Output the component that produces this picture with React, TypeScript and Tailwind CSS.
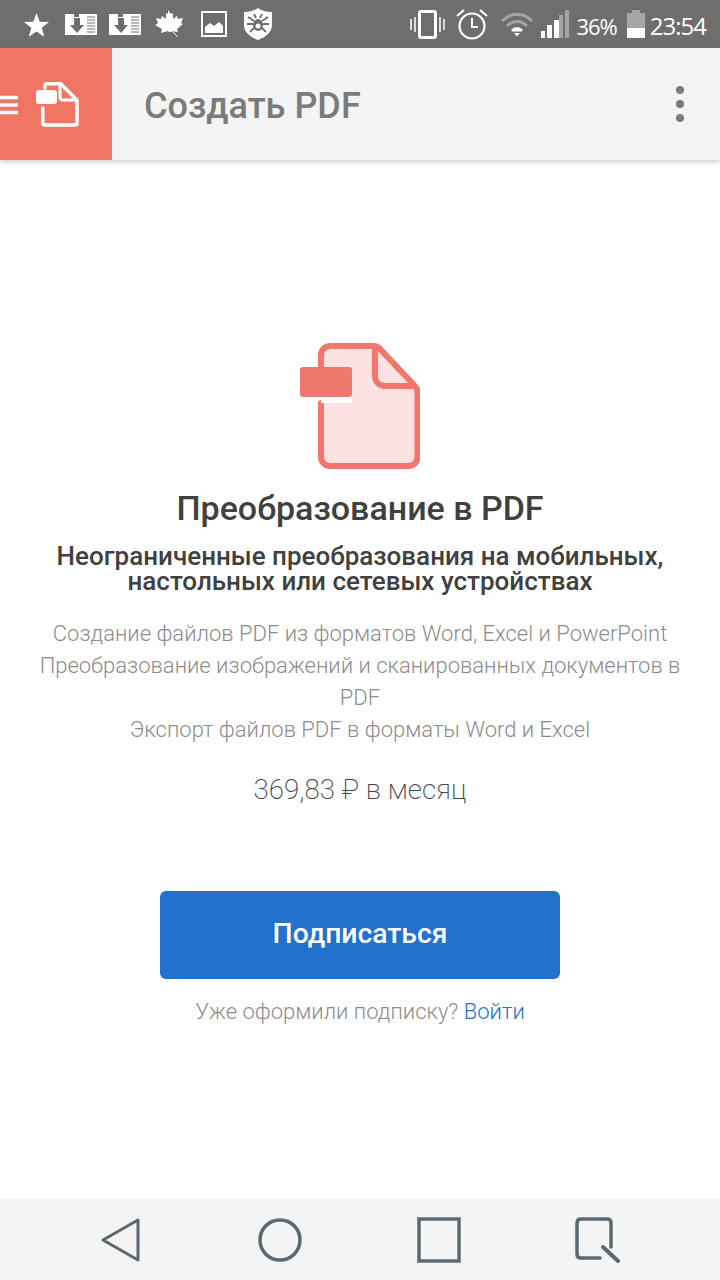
import React from 'react';

const DownloadNote: React.FC = () => (
  <svg width="32" height="22" viewBox="0 0 32 22">
    <path d="M0 1h9v3h5V1h18v21H0z" fill="#fff" />
    <path d="M9 5h6v7h4l-7 8-7-8h4z" fill="#6e6e6e" />
    <path d="M22 4h8M22 7h8M22 10h8M22 13h8M22 16h8M22 19h8" stroke="#6e6e6e" strokeWidth="1" />
  </svg>
);

const StatusBar: React.FC = () => (
  <div className="h-12 bg-[#6e6e6e] flex items-center relative shrink-0">
    <div className="flex items-center pl-6">
      <svg width="25" height="24" viewBox="0 0 25 24" className="mt-0.5">
        <path d="M12.5 0l3.2 8.7 9.3.4-7.3 5.7 2.5 9-7.7-5.2-7.7 5.200 2.500-9L0 9.100l9.300-.4z" fill="#fff" />
      </svg>
      <div className="ml-4 flex gap-3">
        <DownloadNote />
        <DownloadNote />
      </div>
      <svg width="30" height="28" viewBox="0 0 30 28" className="ml-[13px]">
        <path d="M14 0l3 4 2-1 0 6 4-3 1 3 5-1-2 5 2 1-6 5 1 3-7-1 1 1-3 0-1-1-7 2 1-4-7-4 3-2-2-5 5 1 1-3 4 3 0-6 2 1z" fill="#fff" />
        <path d="M16 19l8 8" stroke="#fff" strokeWidth="1" />
      </svg>
      <svg width="26" height="26" viewBox="0 0 26 26" className="ml-[17px]">
        <rect x="1" y="1" width="24" height="24" fill="none" stroke="#fff" strokeWidth="2" />
        <path d="M4 22v-6l5-4 4 3 5-4 4 4v7z" fill="#fff" />
      </svg>
      <svg width="28" height="32" viewBox="0 0 28 32" className="ml-[17px]">
        <path d="M14 0c3 2.500 8 4 14 4v13c0 7-6 12-14 15C6 29 0 24 0 17V4c6 0 11-1.500 14-4z" fill="#fff" />
        <ellipse cx="14" cy="17" rx="5" ry="6" fill="#6e6e6e" />
        <circle cx="14" cy="18" r="2.500" fill="#fff" />
        <path d="M4 9l6 4M24 9l-6 4M3 16h6M25 16h-6M6 24l4-4M22 24l-4-4M10 6l2 4M18 6l-2 4" stroke="#6e6e6e" strokeWidth="1.800" />
      </svg>
    </div>
    <div className="absolute right-[14px] top-0 h-12 flex items-center">
      <svg width="35" height="29" viewBox="0 0 35 29">
        <rect x="9.500" y="1.500" width="16" height="26" rx="1.500" fill="none" stroke="#fff" strokeWidth="3" />
        <path d="M1 9v11M5 7v15M30 7v15M34 9v11" stroke="#fff" strokeWidth="1.500" />
      </svg>
      <svg width="32" height="32" viewBox="0 0 32 32" className="ml-[11px]">
        <circle cx="16" cy="18" r="12.500" fill="none" stroke="#fff" strokeWidth="2.200" />
        <path d="M16 10v9h6" fill="none" stroke="#fff" strokeWidth="2" />
        <path d="M1 8l7-6M31 8l-7-6" stroke="#fff" strokeWidth="2" />
      </svg>
      <svg width="34" height="26" viewBox="0 0 34 26" className="ml-3">
        <path d="M2 10c9-9 21-9 30 0" fill="none" stroke="#a5a5a5" strokeWidth="3" />
        <path d="M7 15c6-6 14-6 20 0" fill="none" stroke="#a5a5a5" strokeWidth="3" />
        <path d="M11 19c4-4 8-4 12 0l-1.500 1.500h-9z" fill="#fff" />
        <path d="M14 22h6l-3 3.500z" fill="#fff" />
      </svg>
      <svg width="28" height="28" viewBox="0 0 28 28" className="ml-[7px]">
        <rect x="0" y="21" width="4" height="7" fill="#fff" />
        <rect x="6" y="15" width="5" height="13" fill="#fff" />
        <rect x="13" y="10" width="5" height="18" fill="#fff" />
        <rect x="18" y="5" width="4" height="23" fill="#a5a5a5" />
        <rect x="24" y="0" width="4" height="28" fill="#a5a5a5" />
      </svg>
      <span className="ml-[7px] mt-[3px] text-[22px] leading-none font-medium text-white font-['Open_Sans','Noto_Sans',sans-serif] tracking-[-1px]">36%</span>
      <svg width="18" height="28" viewBox="0 0 18 28" className="ml-[10px]">
        <rect x="5" y="0" width="8" height="3" fill="#a5a5a5" />
        <rect x="0" y="3" width="18" height="15" fill="#a5a5a5" />
        <rect x="0" y="18" width="18" height="10" fill="#fff" />
      </svg>
      <span className="ml-[5px] mt-[3px] text-[24px] leading-none text-white font-['Open_Sans','Noto_Sans',sans-serif] tracking-[-1px]">23:54</span>
    </div>
  </div>
);

const TopBar: React.FC = () => (
  <header className="h-28 bg-[#f4f4f4] flex items-center shrink-0 shadow-[0_2px_5px_rgba(0,0,0,0.2)] relative">
    <div className="w-28 h-28 bg-[#f07663] flex items-center shrink-0">
      <svg width="18" height="20" viewBox="0 0 18 20" className="mt-0.5">
        <path d="M0 2.500h17M0 10h17M0 17.500h17" stroke="#fff" strokeWidth="3.500" strokeLinecap="round" />
      </svg>
      <svg width="43" height="45" viewBox="0 0 43 45" className="ml-[18px]">
        <path d="M9 6V3.500c0-1 .7-1.700 1.700-1.700H24c.6 0 1.100.2 1.500.6l14.900 15c.4.4.6.9.6 1.400V41c0 1-.7 2-2 2H8.500c-1 0-1.700-.7-1.700-1.700V26" fill="none" stroke="#fff" strokeWidth="3.500" strokeLinecap="round" />
        <path d="M24 3v12c0 2 1 3 3 3h13" fill="none" stroke="#fff" strokeWidth="3" />
        <rect x="0" y="8" width="21" height="14" rx="3" fill="#fff" />
      </svg>
    </div>
    <h1 className="ml-8 mt-[3px] text-[36px] font-medium text-[#7b7b7b] leading-none font-['Roboto',sans-serif]">Создать PDF</h1>
    <div className="ml-auto mr-9 flex flex-col gap-1.5">
      <span className="w-2 h-2 rounded-full bg-[#7b7b7b]" />
      <span className="w-2 h-2 rounded-full bg-[#7b7b7b]" />
      <span className="w-2 h-2 rounded-full bg-[#7b7b7b]" />
    </div>
  </header>
);

const PdfIcon: React.FC = () => (
  <svg width="120" height="126" viewBox="0 0 120 126" className="shrink-0">
    <path d="M21 3h53c2 0 3.500.6 5 2l35 37c2 2 3.500 4 3.500 6.500V114c0 5-4 9-9 9H30c-6 0-9-4-9-9V3z" fill="#fce3e1" />
    <path d="M21 28V12c0-5 4-9 9-9h44c2 0 3.500.6 5 2l35 37c2 2 3.500 4 3.500 6.500V114c0 5-4 9-9 9H30c-5 0-9-4-9-9V60" fill="none" stroke="#ef776d" strokeWidth="6" strokeLinecap="round" />
    <path d="M75 4v29c0 6 4 10 10 10h31" fill="none" stroke="#ef776d" strokeWidth="6" />
    <rect x="21" y="54" width="31" height="6" fill="#fff" />
    <rect x="0" y="24" width="52" height="30" rx="3" fill="#ef776d" />
  </svg>
);

const NavBar: React.FC = () => (
  <nav className="h-[81px] bg-[#f4f4f4] flex items-center shrink-0 pl-[100px]">
    <svg width="40" height="46" viewBox="0 0 40 46" className="mt-[1px]">
      <path d="M38 3L3 23l35 20z" fill="none" stroke="#5a6872" strokeWidth="3" strokeLinejoin="round" />
    </svg>
    <svg width="44" height="44" viewBox="0 0 44 44" className="ml-[118px]">
      <circle cx="22" cy="22" r="20" fill="none" stroke="#5a6872" strokeWidth="3.500" />
    </svg>
    <svg width="44" height="46" viewBox="0 0 44 46" className="ml-[115px]">
      <rect x="2" y="2" width="40" height="42" fill="none" stroke="#5a6872" strokeWidth="3.500" />
    </svg>
    <svg width="46" height="46" viewBox="0 0 46 46" className="ml-[114px]">
      <path d="M36 30V6c0-2.500-1.500-4-4-4H6C3.500 2 2 3.500 2 6v31c0 2.500 1.500 4 4 4h19" fill="none" stroke="#5a6872" strokeWidth="3.500" strokeLinecap="round" />
      <path d="M28 30l15 14" stroke="#5a6872" strokeWidth="4" strokeLinecap="round" />
    </svg>
  </nav>
);

export default function App() {
  return (
    <div className="w-[720px] h-[1280px] bg-white flex flex-col overflow-hidden font-['Roboto',sans-serif]">
      <StatusBar />
      <TopBar />
      <main className="flex-1 flex flex-col items-center text-center pt-[183px]">
        <PdfIcon />
        <h2 className="mt-[19px] text-[34px] leading-10 font-medium text-[#404040]">Преобразование в PDF</h2>
        <div className="mt-4 text-[26px] leading-[25px] font-medium text-[#404040]">
          <p>Неограниченные преобразования на мобильных,</p>
          <p>настольных или сетевых устройствах</p>
        </div>
        <div className="mt-6 w-[660px] text-[22px] leading-8 font-light text-[#8c8c8c]">
          <p>Создание файлов PDF из форматов Word, Excel и PowerPoint</p>
          <p>Преобразование изображений и сканированных документов в PDF</p>
          <p>Экспорт файлов PDF в форматы Word и Excel</p>
        </div>
        <p className="mt-[28px] text-[27.700px] leading-8 font-extralight text-[#444444]">369,83 ₽ в месяц</p>
        <button className="mt-[85px] w-[400px] h-[88px] pb-0.5 rounded-md bg-[#2271cd] text-white text-[28.300px] font-medium">Подписаться</button>
        <p className="mt-[17px] text-[22px] leading-8 font-light text-[#8c8c8c]">
          Уже оформили подписку? <span className="text-[#2271cd]">Войти</span>
        </p>
      </main>
      <NavBar />
    </div>
  );
}
